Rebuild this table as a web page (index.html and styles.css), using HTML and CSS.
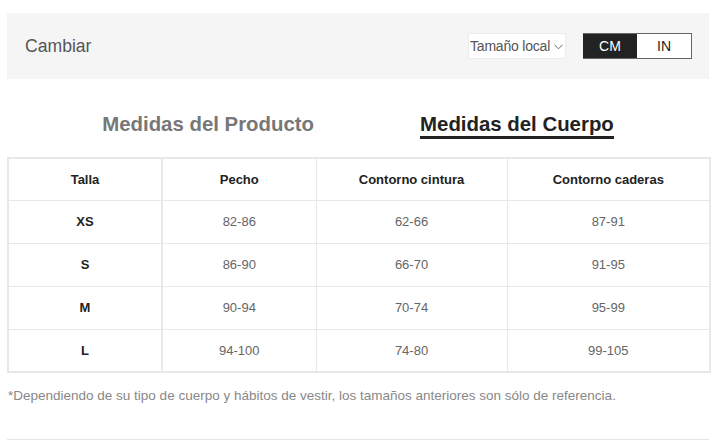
FILE: index.html
```html
<!DOCTYPE html>
<html lang="es">
<head>
<meta charset="utf-8">
<link rel="stylesheet" href="styles.css">
</head>
<body>
<div class="wrap">
  <div class="bar">
    <span class="bar-title">Cambiar</span>
    <div class="bar-right">
      <div class="select">Tamaño local
        <svg class="chev" width="9" height="6" viewBox="0 0 9 6"><path d="M0.5 0.8 L4.5 4.8 L8.5 0.8" fill="none" stroke="#666" stroke-width="1"/></svg>
      </div>
      <div class="toggle">
        <span class="opt active">CM</span>
        <span class="opt">IN</span>
      </div>
    </div>
  </div>
  <div class="tabs">
    <span class="tab">Medidas del Producto</span>
    <span class="tab current">Medidas del Cuerpo</span>
  </div>
  <table class="sizes">
    <colgroup>
      <col class="c1"><col class="c2"><col class="c3"><col class="c4">
    </colgroup>
    <thead>
      <tr><th>Talla</th><th>Pecho</th><th>Contorno cintura</th><th>Contorno caderas</th></tr>
    </thead>
    <tbody>
      <tr><td class="sz">XS</td><td>82-86</td><td>62-66</td><td>87-91</td></tr>
      <tr><td class="sz">S</td><td>86-90</td><td>66-70</td><td>91-95</td></tr>
      <tr><td class="sz">M</td><td>90-94</td><td>70-74</td><td>95-99</td></tr>
      <tr><td class="sz">L</td><td>94-100</td><td>74-80</td><td>99-105</td></tr>
    </tbody>
  </table>
  <p class="note">*Dependiendo de su tipo de cuerpo y hábitos de vestir, los tamaños anteriores son sólo de referencia.</p>
  <div class="rule"></div>
</div>
</body>
</html>
```
FILE: styles.css
```css
* { box-sizing: border-box; }
html, body { margin: 0; padding: 0; background: #fff; }
body { font-family: "Liberation Sans", Arial, sans-serif; color: #222; }
.wrap { width: 702px; margin-left: 7px; padding-top: 13px; }

.bar {
  height: 66px;
  background: #f5f5f5;
  display: flex;
  align-items: center;
  justify-content: space-between;
  padding: 0 17px 0 18px;
}
.bar-title { font-size: 17.6px; color: #555; }
.bar-right { display: flex; align-items: center; gap: 17px; }
.select {
  height: 26px;
  width: 98px;
  background: #fff;
  border: 1px solid #ececec;
  font-size: 14px;
  color: #555;
  display: flex;
  align-items: center;
  padding-left: 1px;
  gap: 4px;
  letter-spacing: -0.2px;
}
.chev { margin-top: 1px; }
.toggle {
  display: flex;
  height: 26px;
  border: 1px solid #666;
  border-left: 0;
}
.opt {
  width: 54px;
  display: flex;
  align-items: center;
  justify-content: center;
  font-size: 14px;
  color: #222;
  background: #fff;
}
.opt.active { background: #222; color: #fff; }

.tabs {
  height: 78px;
  display: flex;
  justify-content: center;
  align-items: flex-start;
  gap: 106px;
  padding-top: 34px;
}
.tab {
  font-size: 20.4px;
  font-weight: bold;
  color: #777;
  line-height: 22px;
  padding-bottom: 1px;
  border-bottom: 3px solid transparent;
}
.tab.current { color: #222; border-bottom-color: #222; }

.sizes {
  width: 702px;
  border-collapse: collapse;
  border: 2px solid #e8e8e8;
  table-layout: fixed;
}
.c1 { width: 154px; }
.c2 { width: 154px; }
.c3 { width: 191px; }
.c4 { width: 203px; }
.sizes th, .sizes td {
  height: 43px;
  border: 1px solid #e8e8e8;
  text-align: center;
  font-size: 13px;
  padding: 0;
}
.sizes th { font-weight: bold; color: #222; height: 42px; }
.sizes th:first-child, .sizes td:first-child { border-right-width: 2px; }
.sizes td { color: #666; }
.sizes td.sz { font-weight: bold; color: #222; }

.note {
  margin: 15px 0 0 1px;
  font-size: 13.5px;
  color: #888;
  line-height: 16px;
}
.rule {
  margin-top: 35px;
  height: 1px;
  background: #e5e5e5;
}
```
